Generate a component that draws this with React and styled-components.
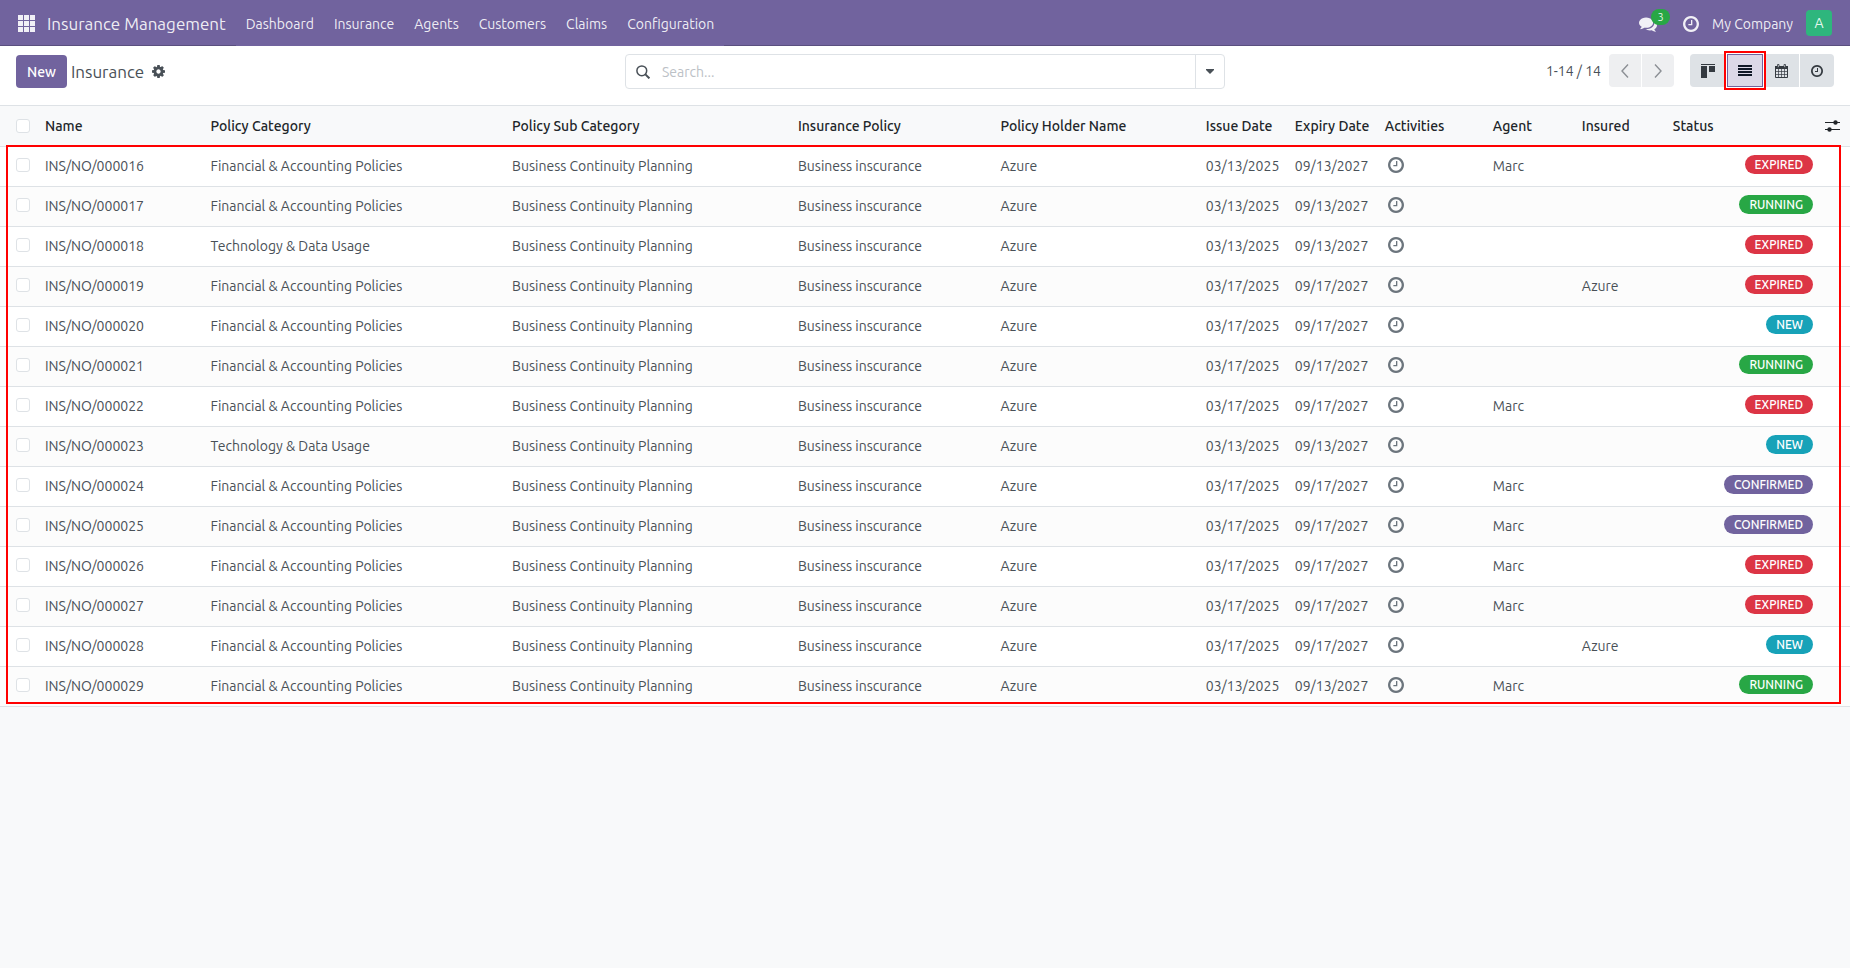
import React from 'react'
import styled, { createGlobalStyle, css } from "styled-components";

const columns = [
  { label: "Name", key: "name", width: "8.95%" },
  { label: "Policy Category", key: "category", width: "16.3%" },
  { label: "Policy Sub Category", key: "sub", width: "15.45%" },
  { label: "Insurance Policy", key: "policy", width: "10.95%" },
  { label: "Policy Holder Name", key: "holder", width: "11.1%" },
  { label: "Issue Date", key: "issue", width: "89px" },
  { label: "Expiry Date", key: "expiry", width: "90px" },
  { label: "Activities", key: "activity", width: "108px" },
  { label: "Agent", key: "agent", width: "89px" },
  { label: "Insured", key: "insured", width: "91px" },
  { label: "Status", key: "status", width: "auto" },
];

const financial = "Financial & Accounting Policies";
const technology = "Technology & Data Usage";

const records = [
  ["16", financial, "13", "Marc", "", "Expired"],
  ["17", financial, "13", "", "", "Running"],
  ["18", technology, "13", "", "", "Expired"],
  ["19", financial, "17", "", "Azure", "Expired"],
  ["20", financial, "17", "", "", "New"],
  ["21", financial, "17", "", "", "Running"],
  ["22", financial, "17", "Marc", "", "Expired"],
  ["23", technology, "13", "", "", "New"],
  ["24", financial, "17", "Marc", "", "Confirmed"],
  ["25", financial, "17", "Marc", "", "Confirmed"],
  ["26", financial, "17", "Marc", "", "Expired"],
  ["27", financial, "17", "Marc", "", "Expired"],
  ["28", financial, "17", "", "Azure", "New"],
  ["29", financial, "13", "Marc", "", "Running"],
].map(([no, category, day, agent, insured, status]) => ({
  name: `INS/NO/0000${no}`,
  category,
  sub: "Business Continuity Planning",
  policy: "Business inscurance",
  holder: "Azure",
  issue: `03/${day}/2025`,
  expiry: `09/${day}/2027`,
  agent,
  insured,
  status,
}));

const menu = ["Dashboard", "Insurance", "Agents", "Customers", "Claims", "Configuration"];

const statusColors = {
  Expired: "#dc3545",
  Running: "#28a745",
  New: "#17a2b8",
  Confirmed: "#71639e",
};

const ClockIcon = ({ size }) => (
  <svg width={size} height={size} viewBox="0 128 1536 1536" fill="currentColor" aria-hidden="true">
    <path d="M896 544v448q0 14-9 23t-23 9h-320q-14 0-23-9t-9-23v-64q0-14 9-23t23-9h224v-352q0-14 9-23t23-9h64q14 0 23 9t9 23zm416 352q0-148-73-273t-198-198-273-73-273 73-198 198-73 273 73 273 198 198 273 73 273-73 198-198 73-273zm224 0q0 209-103 385.5t-279.5 279.5-385.5 103-385.5-103-279.5-279.5-103-385.5 103-385.5 279.5-279.5 385.5-103 385.5 103 279.5 279.5 103 385.5z" />
  </svg>
);

const CogIcon = () => (
  <svg width="13" height="13" viewBox="0 128 1536 1536" fill="currentColor" aria-hidden="true">
    <path d="M1024 896q0-106-75-181t-181-75-181 75-75 181 75 181 181 75 181-75 75-181zm512-109v222q0 12-8 23t-20 13l-185 28q-19 54-39 91 35 50 107 138 10 12 10 25t-9 23q-27 37-99 108t-94 71q-12 0-26-9l-138-108q-44 23-91 38-16 136-29 186-7 28-36 28h-222q-14 0-24.5-8.5t-11.5-21.5l-28-184q-49-16-90-37l-141 107q-10 9-25 9-14 0-25-11-126-114-165-168-7-10-7-23 0-12 8-23 15-21 51-66.5t54-70.5q-27-50-41-99l-183-27q-13-2-21-12.5t-8-23.5v-222q0-12 8-23t19-13l186-28q14-46 39-92-40-57-107-138-10-12-10-24 0-10 9-23 26-36 98.5-107.5t94.5-71.5q13 0 26 10l138 107q44-23 91-38 16-136 29-186 7-28 36-28h222q14 0 24.5 8.5t11.5 21.5l28 184q49 16 90 37l142-107q9-9 24-9 13 0 25 10 129 119 165 170 7 8 7 22 0 12-8 23-15 21-51 66.5t-54 70.5q26 50 41 98l183 28q13 2 21 12.5t8 23.5z" />
  </svg>
);

const CommentsIcon = () => (
  <svg width="18" height="18" viewBox="0 0 1792 1792" fill="currentColor" aria-hidden="true">
    <path d="M1408 768q0 139-94 257t-256.5 186.5-353.5 68.5q-86 0-176-16-124 88-278 128-36 9-86 16h-3q-11 0-20.5-8t-11.5-21q-1-3-1-6.5t.5-6.5 2-6l2.5-5 3.5-5.5 4-5 4.5-5 4-4.5q5-6 23-25t26-29.5 22.5-29 25-38.5 20.5-44q-124-72-195-177t-71-224q0-139 94-257t256.5-186.5 353.5-68.5 353.5 68.5 256.5 186.5 94 257zm384 256q0 120-71 224.5t-195 176.5q10 24 20.5 44t25 38.5 22.5 29 26 29.5 23 25q1 1 4 4.5t4.5 5 4 5 3.5 5.5l2.5 5 2 6 .5 6.5-1 6.5q-3 14-13 22t-22 7q-50-7-86-16-154-40-278-128-90 16-176 16-271 0-472-132 58 4 88 4 161 0 309-45t264-129q125-92 192-212t67-254q0-77-23-152 129 71 204 178t75 230z" />
  </svg>
);

const AppsIcon = () => (
  <svg width="17" height="17" viewBox="0 0 17 17" fill="currentColor" aria-hidden="true">
    {[0, 6, 12].map((y) => [0, 6, 12].map((x) => (
      <rect key={`${x}-${y}`} x={x} y={y} width="5" height="5" />
    )))}
  </svg>
);

const SearchIcon = () => (
  <svg width="14" height="14" viewBox="0 0 14 14" fill="none" stroke="currentColor" aria-hidden="true">
    <circle cx="5.8" cy="5.8" r="4.9" strokeWidth="1.5" />
    <path d="M9.4 9.4l4 4" strokeWidth="2" />
  </svg>
);

const CaretIcon = () => (
  <svg width="8" height="5" viewBox="0 0 8 5" fill="currentColor" aria-hidden="true">
    <path d="M0 0h8v1L4 5 0 1z" />
  </svg>
);

const ChevronIcon = ({ next }) => (
  <svg width="8" height="14" viewBox="0 0 8 14" fill="none" stroke="currentColor" strokeWidth="1.4" aria-hidden="true">
    <path d={next ? "M1 .5L7 7l-6 6.5" : "M7 .5L1 7l6 6.5"} />
  </svg>
);

const KanbanIcon = () => (
  <svg width="14" height="14" viewBox="0 0 14 14" fill="currentColor" aria-hidden="true">
    <path d="M0 0h14v1H0zM0 2h6v12H0zM8 2h6v6H8z" />
  </svg>
);

const ListIcon = () => (
  <svg width="14" height="11" viewBox="0 0 14 11" fill="currentColor" aria-hidden="true">
    <path d="M0 0h14v2H0zM0 3h14v2H0zM0 6h14v2H0zM0 9h14v2H0z" />
  </svg>
);

const CalendarIcon = () => (
  <svg width="13" height="14" viewBox="0 0 13 14" fill="none" stroke="currentColor" aria-hidden="true">
    <path d="M.5 2.5h12v11H.5z" />
    <path d="M0 2h13v3H0z" fill="currentColor" stroke="none" />
    <path d="M3.5 5v8.5M6.5 5v8.5M9.5 5v8.5M1 7.5h11M1 10.5h11" strokeWidth=".7" />
    <path d="M2.5 .5h1.5v3h-1.5zM9 .5h1.5v3H9z" fill="#dee2e6" strokeWidth=".8" />
  </svg>
);

const SlidersIcon = () => (
  <svg width="15" height="12" viewBox="0 0 15 12" fill="currentColor" aria-hidden="true">
    <path d="M0 2h15v1H0zM0 9h15v1H0z" />
    <circle cx="10.5" cy="2.5" r="2.2" />
    <circle cx="4.5" cy="9.5" r="2.2" />
  </svg>
);

const App = () => {
  return (
    <Page>
      <GlobalStyle />
      <Navbar>
        <AppsButton aria-label="Home menu"><AppsIcon /></AppsButton>
        <Brand href="#">Insurance Management</Brand>
        <Menu>
          {
            menu.map((el) => (
              <MenuLink href="#" key={el}>{el}</MenuLink>
            ))
          }
        </Menu>
        <Systray>
          <MessagesButton aria-label="Messages">
            <CommentsIcon />
            <Counter>3</Counter>
          </MessagesButton>
          <TrayButton aria-label="Activities"><ClockIcon size={16} /></TrayButton>
          <TrayButton>My Company</TrayButton>
          <Avatar>A</Avatar>
        </Systray>
      </Navbar>

      <ControlPanel>
        <Breadcrumb>
          <NewButton>New</NewButton>
          <Title>Insurance</Title>
          <PlainButton aria-label="Actions"><CogIcon /></PlainButton>
        </Breadcrumb>
        <SearchBox>
          <SearchLabel>
            <SearchIcon />
            <SearchInput type="text" placeholder="Search..." aria-label="Search" />
          </SearchLabel>
          <SearchToggle aria-label="Search options"><CaretIcon /></SearchToggle>
        </SearchBox>
        <PanelRight>
          <PagerText>1-14 / 14</PagerText>
          <ButtonGroup>
            <PagerButton aria-label="Previous"><ChevronIcon /></PagerButton>
            <PagerButton aria-label="Next"><ChevronIcon next /></PagerButton>
          </ButtonGroup>
          <ButtonGroup>
            <ViewButton aria-label="Kanban view"><KanbanIcon /></ViewButton>
            <ViewButton aria-label="List view" $active><ListIcon /></ViewButton>
            <ViewButton aria-label="Calendar view"><CalendarIcon /></ViewButton>
            <ViewButton aria-label="Activity view"><ClockIcon size={12} /></ViewButton>
          </ButtonGroup>
        </PanelRight>
      </ControlPanel>

      <ListArea>
        <Table>
          <thead>
            <tr>
              <HeadCell $width="40px" $check><Checkbox type="checkbox" aria-label="Select all" /></HeadCell>
              {
                columns.map((col) => (
                  <HeadCell key={col.key} $width={col.width}>{col.label}</HeadCell>
                ))
              }
              <HeadCell $width="30px">
                <PlainButton aria-label="Optional columns"><SlidersIcon /></PlainButton>
              </HeadCell>
            </tr>
          </thead>
          <tbody>
            {
              records.map((rec) => (
                <Row key={rec.name}>
                  <CheckCell><Checkbox type="checkbox" aria-label={`Select ${rec.name}`} /></CheckCell>
                  {
                    columns.map(({ key }) => {
                      if (key === "activity") {
                        return (
                          <ActivityCell key={key}>
                            <ActivityButton aria-label="Schedule activity"><ClockIcon size={16} /></ActivityButton>
                          </ActivityCell>
                        );
                      }
                      if (key === "status") {
                        return (
                          <StatusCell key={key}>
                            <Badge $color={statusColors[rec.status]}>{rec.status}</Badge>
                          </StatusCell>
                        );
                      }
                      return <Cell key={key}>{rec[key]}</Cell>;
                    })
                  }
                  <Cell />
                </Row>
              ))
            }
          </tbody>
        </Table>
        <Highlight />
      </ListArea>
    </Page>
  )
}

export default App;

const GlobalStyle = createGlobalStyle`
  *, *::before, *::after {
    box-sizing: border-box;
  }

  body {
    margin: 0;
    background: #f8f9fa;
    color: #495057;
    font-family: Ubuntu, "Noto Sans", "Open Sans", sans-serif;
    font-size: 14px;
    line-height: 20px;
  }

  button, input {
    font: inherit;
    color: inherit;
  }

  svg {
    display: block;
  }
`

const Page = styled.div`
  min-height: 100vh;
  background: #f8f9fa;
`

const PlainButton = styled.button`
  display: flex;
  align-items: center;
  padding: 0;
  border: 0;
  background: none;
  cursor: pointer;
`

const Navbar = styled.header`
  display: flex;
  align-items: center;
  height: 46px;
  padding: 0 18px;
  background: #71639e;
  box-shadow: inset 0 -1px 0 #5a4f7f;
  color: rgba(255, 255, 255, 0.9);
`

const AppsButton = styled(PlainButton)`
  margin-right: 12px;
`

const Brand = styled.a`
  padding-top: 1px;
  margin-right: 10px;
  color: inherit;
  font-size: 17px;
  text-decoration: none;
`

const Menu = styled.nav`
  display: flex;
  align-self: stretch;
  background: #71639e;
`

const MenuLink = styled.a`
  display: flex;
  align-items: center;
  padding: 2px 10px 0;
  color: inherit;
  text-decoration: none;
`

const Systray = styled.div`
  display: flex;
  align-items: center;
  gap: 13px;
  margin-left: auto;
`

const TrayButton = styled(PlainButton)`
  padding-top: 2px;
  white-space: nowrap;
`

const MessagesButton = styled(TrayButton)`
  position: relative;
  margin-right: 13px;
`

const Counter = styled.span`
  position: absolute;
  left: 12px;
  top: -4px;
  width: 19px;
  border-radius: 8px;
  background: #28a745;
  font-size: 11px;
  line-height: 16px;
  text-align: center;
`

const Avatar = styled(PlainButton)`
  justify-content: center;
  width: 26px;
  height: 26px;
  border-radius: 4px;
  background: #2eb67d;
`

const ControlPanel = styled.div`
  display: grid;
  grid-template-columns: 1fr minmax(0, 600px) 1fr;
  align-items: start;
  height: 60px;
  padding: 8px 16px 0;
  background: #fff;
  border-bottom: 1px solid #dee2e6;
`

const Breadcrumb = styled.div`
  display: flex;
  align-items: center;
  gap: 4px;
  height: 35px;
`

const NewButton = styled.button`
  height: 33px;
  padding: 0 11px;
  border: 0;
  border-radius: 4px;
  background: #71639e;
  color: #fff;
  font-weight: 500;
`

const Title = styled.span`
  margin-right: 4px;
  font-size: 17px;
`

const SearchBox = styled.div`
  display: flex;
  height: 35px;
  border: 1px solid #dee2e6;
  border-radius: 4px;
`

const SearchLabel = styled.label`
  display: flex;
  flex: 1;
  align-items: center;
  gap: 12px;
  padding-left: 10px;
`

const SearchInput = styled.input`
  flex: 1;
  min-width: 0;
  padding: 0;
  border: 0;
  outline: 0;
  background: none;

  &::placeholder {
    color: #bcc1c6;
    opacity: 1;
  }
`

const SearchToggle = styled(PlainButton)`
  justify-content: center;
  width: 29px;
  border-left: 1px solid #dee2e6;
`

const PanelRight = styled.div`
  display: flex;
  align-items: center;
  justify-content: flex-end;
`

const PagerText = styled.span`
  margin-right: 8px;
`

const ButtonGroup = styled.div`
  display: flex;
  gap: 1px;

  & + & {
    margin-left: 16px;
  }

  button:first-child {
    border-radius: 4px 0 0 4px;
  }

  button:last-child {
    border-radius: 0 4px 4px 0;
  }
`

const PagerButton = styled(PlainButton)`
  justify-content: center;
  width: 32px;
  height: 33px;
  background: #eeeff1;
  color: #8b8f94;
`

const ViewButton = styled(PlainButton)`
  height: 33px;
  padding: 0 11px;
  background: #dee2e6;
  color: #343a40;

  ${({ $active }) => $active && css`
    z-index: 1;
    padding: 0 10px;
    border: 1px solid #71639e;
    background: #dcd8e7;
    color: #111827;
    outline: 2px solid #f00;
    outline-offset: 1px;
  `}
`

const ListArea = styled.main`
  position: relative;
`

const Table = styled.table`
  width: 100%;
  table-layout: fixed;
  border-collapse: separate;
  border-spacing: 0;
  background: #fff;
`

const HeadCell = styled.th`
  width: ${({ $width }) => $width};
  height: 41px;
  padding: 0 0 0 ${({ $check }) => $check ? "16px" : "5px"};
  border-bottom: 1px solid #dee2e6;
  background: #f8f9fa;
  color: #212529;
  font-weight: 500;
  text-align: left;
  white-space: nowrap;
`

const Row = styled.tr`
  &:nth-child(even) {
    background: #fcfcfc;
  }
`

const Cell = styled.td`
  height: 40px;
  padding: 0 5px 1px;
  border-bottom: 1px solid #dee2e6;
  white-space: nowrap;
`

const CheckCell = styled(Cell)`
  padding: 0 0 3px 16px;
`

const ActivityCell = styled(Cell)`
  padding: 0 8px 3px;
`

const StatusCell = styled(Cell)`
  padding: 0 7px 5px 5px;
  text-align: right;
`

const Checkbox = styled.input`
  appearance: none;
  display: block;
  width: 14px;
  height: 14px;
  margin: 0;
  border: 1px solid #dee2e6;
  border-radius: 3px;
  background: #fff;
`

const ActivityButton = styled(PlainButton)`
  color: #6c757d;
`

const Badge = styled.span`
  display: inline-block;
  padding: 0 10px;
  border-radius: 10px;
  background: ${({ $color }) => $color};
  color: #fff;
  font-size: 12px;
  font-weight: 500;
  line-height: 19px;
  text-transform: uppercase;
`

const Highlight = styled.div`
  position: absolute;
  inset: 39px 9px 3px 6px;
  border: 2px solid #f00;
  pointer-events: none;
`
